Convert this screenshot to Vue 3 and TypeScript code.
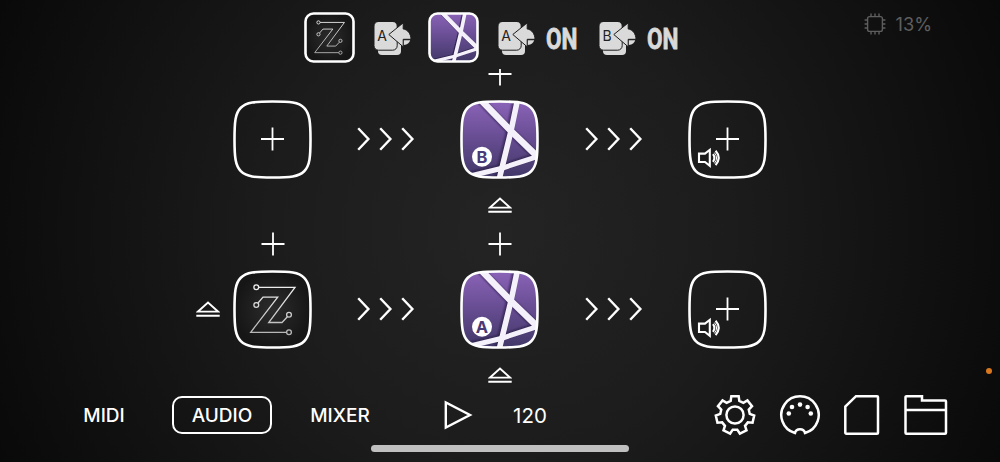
<template>
  <div class="app">
    <header class="topbar">
      <svg class="chip" viewBox="0 0 51 51">
        <rect x="1.5" y="1.5" width="48" height="48" rx="8" fill="url(#dark)" class="frame" />
        <use href="#art-z" transform="translate(-1.2 -1.2) scale(.672)" />
      </svg>
      <svg class="load" viewBox="0 0 37 33">
        <use href="#art-load" />
        <text x="8" y="19.3" class="load-letter">A</text>
      </svg>
      <svg class="chip purple" viewBox="0 0 51 51">
        <g clip-path="url(#clip-chip)">
          <use href="#art-lines" transform="scale(.646)" />
        </g>
        <rect x="1.5" y="1.5" width="48" height="48" rx="8" fill="none" class="frame" />
      </svg>
      <div v-for="slot in slots" :key="slot" class="slot">
        <svg class="load" viewBox="0 0 37 33">
          <use href="#art-load" />
          <text x="8" y="19.3" class="load-letter">{{ slot }}</text>
        </svg>
        <svg class="on" viewBox="0 0 32 24">
          <text x="0" y="22.4" textLength="31.5" lengthAdjust="spacingAndGlyphs">ON</text>
        </svg>
      </div>
      <div class="cpu">
        <svg viewBox="0 0 22 22" width="22" height="22">
          <rect x="3.6" y="3.6" width="14.8" height="14.8" rx="2" />
          <path d="M7 .6v3M11 .6v3M15 .6v3M7 18.4v3M11 18.4v3M15 18.4v3M.6 7h3M.6 11h3M.6 15h3M18.4 7h3M18.4 11h3M18.4 15h3" />
        </svg>
        <span>13%</span>
      </div>
    </header>

    <main class="lanes">
      <section v-for="lane in lanes" :key="lane.name" class="lane">
        <svg v-if="lane.loaded" class="eject side" viewBox="0 0 24 16"><use href="#art-eject" /></svg>
        <svg v-if="lane.loaded" class="plus first" viewBox="0 0 24 24"><use href="#art-plus" /></svg>
        <svg class="plus second" viewBox="0 0 24 24"><use href="#art-plus" /></svg>

        <svg class="tile input" viewBox="0 0 79 79">
          <path :d="squircle" :fill="lane.loaded ? 'url(#dark)' : 'none'" class="frame" />
          <use v-if="lane.loaded" href="#art-z" />
          <path v-else d="M39.5 27.5v23M28 39h23" class="cross" />
        </svg>

        <svg class="arrows left" viewBox="0 0 58 24"><use href="#art-arrows" /></svg>

        <svg class="tile effect" viewBox="0 0 79 79">
          <g clip-path="url(#clip-tile)">
            <use href="#art-lines" />
          </g>
          <path :d="squircle" fill="none" class="frame" />
          <circle cx="22" cy="56.7" r="10" fill="#fff" />
          <text x="22" y="62.6" class="badge">{{ lane.name }}</text>
        </svg>

        <svg class="arrows right" viewBox="0 0 58 24"><use href="#art-arrows" /></svg>

        <svg class="tile output" viewBox="0 0 79 79">
          <path :d="squircle" fill="none" class="frame" />
          <path d="M39.5 27.5v23M28 39h23" class="cross" />
          <g class="speaker">
            <path d="M11 53.6h6l4.8-3.8v16l-4.8-3.8h-6z" />
            <path d="M25 54.2q2.8 3.8 0 7.6M27.6 50.8q6.2 7 0 14.4" />
            <path d="M26.4 52.6q4.4 5.4 0 10.8" class="mid" />
          </g>
        </svg>

        <svg class="eject bottom" viewBox="0 0 24 16"><use href="#art-eject" /></svg>
      </section>
    </main>

    <footer class="toolbar">
      <nav class="tabs">
        <button
          v-for="tab in tabs"
          :key="tab"
          type="button"
          :class="{ active: tab === activeTab }"
          @click="activeTab = tab"
        >{{ tab }}</button>
      </nav>
      <svg class="play" viewBox="0 0 29 30"><path d="M1.8 2.4v25.2L26 15z" /></svg>
      <span class="tempo">120</span>
      <div class="tools">
        <svg viewBox="0 0 42 42" width="42" height="42">
          <path :d="gear" />
          <circle cx="21" cy="21" r="8.6" />
        </svg>
        <svg viewBox="0 0 42 42" width="42" height="42">
          <path d="M16 39a18.7 18.7 0 1 1 10 0q-.8-3.8-5-3.8t-5 3.8z" />
          <g class="pins">
            <circle cx="9.8" cy="19.5" r="2.3" />
            <circle cx="13" cy="13" r="2.3" />
            <circle cx="21" cy="10.6" r="2.3" />
            <circle cx="28.6" cy="13" r="2.3" />
            <circle cx="31.8" cy="19.5" r="2.3" />
          </g>
        </svg>
        <svg viewBox="0 0 36 42" width="36" height="42">
          <path d="M12 2.2h21a1 1 0 0 1 1 1v35.5a1 1 0 0 1-1 1H2.3a1 1 0 0 1-1-1V12.5z" />
        </svg>
        <svg viewBox="0 0 44 42" width="44" height="42">
          <path d="M2.5 2.2h15.5v4.4h23a1 1 0 0 1 1 1v31.1a1 1 0 0 1-1 1H2.5a1 1 0 0 1-1-1V3.2a1 1 0 0 1 1-1zM1.5 16h40.5" />
        </svg>
      </div>
    </footer>
    <div class="home-bar"></div>
    <i class="mic-dot"></i>

    <!-- shared drawings -->
    <svg class="defs" width="0" height="0">
      <defs>
        <linearGradient id="violet" x1="0" y1="0" x2="0" y2="1">
          <stop offset="0" stop-color="#8c64b9" />
          <stop offset=".5" stop-color="#664c91" />
          <stop offset="1" stop-color="#403766" />
        </linearGradient>
        <linearGradient id="wire" gradientUnits="userSpaceOnUse" x1="0" y1="15" x2="0" y2="65">
          <stop offset="0" stop-color="#f0f0f0" />
          <stop offset="1" stop-color="#b4b4b4" />
        </linearGradient>
        <radialGradient id="dark">
          <stop offset="0" stop-color="#2c2c2c" />
          <stop offset="1" stop-color="#161616" />
        </radialGradient>
        <filter id="soft" x="-20%" y="-20%" width="140%" height="140%">
          <feGaussianBlur stdDeviation="1" />
        </filter>
        <clipPath id="clip-tile"><path :d="squircle" /></clipPath>
        <clipPath id="clip-chip"><rect x="1.5" y="1.5" width="48" height="48" rx="8" /></clipPath>
        <g id="art-lines">
          <rect width="79" height="79" fill="url(#violet)" />
          <g fill="none" stroke="#1c1535" stroke-opacity=".65" filter="url(#soft)" transform="translate(-1.5 -.8)">
            <path d="M18-3 51 31 82 61" stroke-width="7" />
            <path d="M58.5-5 51 31 39 80" stroke-width="6" />
            <path d="M4 77 41 68.5 82 55" stroke-width="5" />
          </g>
          <g fill="none" stroke="#f5f1fa">
            <path d="M18-3 51 31 82 61" stroke-width="6.6" />
            <path d="M58.5-5 51 31 39 80" stroke-width="5.6" />
            <path d="M4 77.5 41 68.5 82 55" stroke-width="5" />
          </g>
        </g>
        <g id="art-z" fill="none" stroke="url(#wire)" stroke-width="1.3">
          <path d="M25.8 17.3H62L35.7 52.5H49l5.4-5.8M25 33l5-5.8h14.7L17.7 62.3h35.8" />
          <circle cx="23.3" cy="17.3" r="2.4" />
          <circle cx="23.3" cy="35" r="2.4" />
          <circle cx="56" cy="44.7" r="2.4" />
          <circle cx="56" cy="62.3" r="2.4" />
        </g>
        <g id="art-load" fill="#dadada" stroke="#1c1c1c">
          <rect x="4" y="5" width="23" height="28" rx="4" stroke="none" />
          <rect x="0" y="-.5" width="23.2" height="28.7" rx="4.5" />
          <path d="M14.8 12.5 29.2 .9V7C33.5 7.4 37 11.8 37 17.3h-7.8v7.5z" />
          <path d="M29.9 18.3h6.3q-1.1 4-6.3 4.7z" stroke="none" />
        </g>
        <g id="art-plus" fill="none" stroke="#fff" stroke-width="1.8">
          <path d="M12 .5v23M.5 12h23" />
        </g>
        <g id="art-eject" fill="none" stroke="#fff" stroke-width="1.9">
          <path d="M2 10.6h20L12 1.6zM.3 14.7h23.4" />
        </g>
        <g id="art-arrows" fill="none" stroke="#fff" stroke-width="2.4">
          <path d="M1.2 1.2 11.4 12 1.2 22.8M23.2 1.2 33.4 12 23.2 22.8M45.2 1.2 55.4 12 45.2 22.8" />
        </g>
      </defs>
    </svg>
  </div>
</template>

<script setup lang="ts">
import { ref } from 'vue'

interface Lane {
  name: string
  loaded: boolean
}

const lanes: Lane[] = [
  { name: 'B', loaded: false },
  { name: 'A', loaded: true }
]
const slots = ['A', 'B']
const tabs = ['MIDI', 'AUDIO', 'MIXER']
const activeTab = ref('AUDIO')

const squircle =
  'M39.5 1.5C57 1.5 65.7 2.2 71.2 7.8S77.5 22 77.5 39.5 76.8 65.7 71.2 71.2 57 77.5 39.5 77.5 13.3 76.8 7.8 71.2 1.5 57 1.5 39.5 2.2 13.3 7.8 7.8 22 1.5 39.5 1.5z'

// seven teeth, the first one pointing up
const gearPath = (): string => {
  const points: string[] = []
  const corners = [[-17, 14.8], [-11, 19.2], [11, 19.2], [17, 14.8]]
  for (let i = 0; i < 7; i++) {
    for (const [offset, radius] of corners) {
      const angle = ((i * 360) / 7 - 90 + offset) * (Math.PI / 180)
      points.push(`${(21 + radius * Math.cos(angle)).toFixed(2)} ${(21 + radius * Math.sin(angle)).toFixed(2)}`)
    }
  }
  return `M${points.join('L')}z`
}
const gear = gearPath()
</script>

<style>
body {
  background: #0c0c0c;
}
</style>

<style scoped>
.app {
  position: relative;
  width: 1000px;
  height: 462px;
  overflow: hidden;
  display: flex;
  flex-direction: column;
  background: radial-gradient(circle at 50% 50%, #242424 0, #1c1c1c 230px, #0f0f0f 450px, #090909 550px);
  color: #fff;
  font-family: Inter, "Liberation Sans", sans-serif;
}
svg {
  display: block;
  flex: none;
}
.defs {
  position: absolute;
}
.frame {
  stroke: #fff;
  stroke-width: 2.6;
}
.topbar {
  height: 69px;
  flex: none;
  box-sizing: border-box;
  padding: 12px 68px 0 304px;
  display: flex;
  align-items: flex-start;
}
.chip {
  width: 51px;
  height: 51px;
}
.load {
  width: 37px;
  height: 33px;
  margin: 10px 0 0 19px;
}
.load-letter {
  font-size: 14px;
  text-anchor: middle;
  fill: #222;
}
.purple {
  margin-left: 17px;
}
.slot {
  display: flex;
  width: 101px;
}
.slot .load {
  margin-left: 18.5px;
}
.on {
  width: 32px;
  height: 24px;
  margin: 14.5px 0 0 11.5px;
  overflow: visible;
}
.on text {
  font: 700 29.5px Roboto, sans-serif;
  fill: #d9d9d9;
  stroke: #d9d9d9;
  stroke-width: .8;
}
.cpu {
  margin-left: auto;
  display: flex;
  align-items: center;
  gap: 10px;
  height: 24px;
  color: #5e5e5e;
  font-size: 18.2px;
}
.cpu svg {
  fill: none;
  stroke: #5e5e5e;
  stroke-width: 1.4;
}
.lanes {
  height: 325px;
  flex: none;
  overflow: hidden;
}
.lane {
  display: grid;
  grid-template-columns: 37px 79px 148.4px 79px 148.9px 79px;
  grid-template-rows: 45.5px 79px 45.5px;
  margin-left: 196px;
  align-items: center;
  justify-items: center;
}
.lane:first-child {
  margin-top: -15px;
}
.plus {
  width: 24px;
  height: 24px;
  grid-row: 1;
  margin-bottom: 5.5px;
}
.first {
  grid-column: 2;
}
.second {
  grid-column: 4;
}
.tile {
  width: 79px;
  height: 79px;
  grid-row: 2;
}
.input {
  grid-column: 2;
}
.effect {
  grid-column: 4;
}
.output {
  grid-column: 6;
}
.arrows {
  width: 58px;
  height: 24px;
  grid-row: 2;
}
.left {
  grid-column: 3;
}
.right {
  grid-column: 5;
}
.eject {
  width: 24px;
  height: 16px;
}
.side {
  grid-area: 2 / 1;
  justify-self: start;
}
.bottom {
  grid-area: 3 / 4;
  margin-top: 6.5px;
}
.cross {
  fill: none;
  stroke: #fff;
  stroke-width: 1.8;
}
.badge {
  font-size: 16.5px;
  font-weight: 700;
  text-anchor: middle;
  fill: #4a3b78;
}
.speaker {
  fill: none;
  stroke: #fff;
  stroke-width: 2.1;
}
.speaker .mid {
  stroke-width: 1;
}
.toolbar {
  height: 42px;
  flex: none;
  display: flex;
  align-items: center;
  padding-right: 52.5px;
}
.tabs {
  display: flex;
  width: 444px;
}
.tabs button {
  width: 100px;
  height: 38px;
  padding: 0;
  border: 0 solid #fff;
  border-radius: 10px;
  background: none;
  color: #fff;
  font: 550 19px Inter, sans-serif;
}
.tabs button:first-child {
  margin: 0 18px 0 54px;
}
.tabs button:last-child {
  margin-left: 18px;
}
.tabs .active {
  border-width: 2.5px;
}
.play {
  width: 29px;
  height: 30px;
  fill: none;
  stroke: #fff;
  stroke-width: 2.4;
}
.tempo {
  width: 36px;
  margin-left: 39px;
  font-size: 20.5px;
  text-align: center;
}
.tools {
  margin-left: auto;
  display: flex;
  gap: 23.3px;
  fill: none;
  stroke: #fff;
  stroke-width: 2.5;
}
.pins {
  fill: #fff;
  stroke: none;
}
.home-bar {
  width: 258px;
  height: 7px;
  margin: 9px auto 0;
  border-radius: 4px;
  background: #c0c0c0;
}
.mic-dot {
  position: absolute;
  left: 986px;
  top: 368px;
  width: 6px;
  height: 6px;
  border-radius: 50%;
  background: #d8771d;
}
</style>
